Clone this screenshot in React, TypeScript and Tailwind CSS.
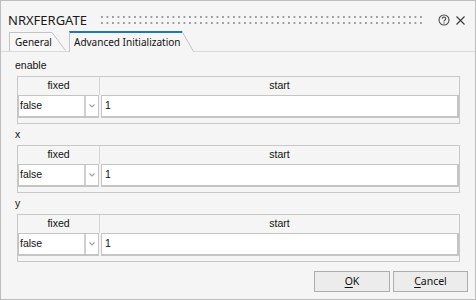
import React from "react";

const UI = "font-['Noto_Sans',sans-serif]";
const GRID = "font-['Liberation_Sans',Arial,sans-serif]";

const SECTIONS = [
  { label: "enable", fixed: "false", start: "1" },
  { label: "x",      fixed: "false", start: "1" },
  { label: "y",      fixed: "false", start: "1" },
];

function Grip() {
  return (
    <svg className="flex-1 h-[8px] mx-[14px]" shapeRendering="crispEdges">
      <defs>
        <pattern id="grip" width="5.5" height="6" patternUnits="userSpaceOnUse">
          <rect x="0" y="0" width="2" height="2" fill="#9c9c9c" />
        </pattern>
      </defs>
      <rect x="0" y="0" width="100%" height="8" fill="url(#grip)" />
    </svg>
  );
}

function HelpIcon() {
  return (
    <svg width="12" height="12" viewBox="0 0 12 12" className="shrink-0">
      <circle cx="6" cy="6" r="5" fill="none" stroke="#4a4a4a" strokeWidth="1.1" />
      <path d="M4.3 4.7a1.7 1.7 0 1 1 2.6 1.4c-.6.4-.9.7-.9 1.3" fill="none" stroke="#4a4a4a" strokeWidth="1.1" />
      <circle cx="6" cy="8.9" r="0.7" fill="#4a4a4a" />
    </svg>
  );
}

function CloseIcon() {
  return (
    <svg width="9" height="9" viewBox="0 0 9 9" className="shrink-0">
      <path d="M0.5 0.5L8.5 8.5M8.5 0.5L0.5 8.5" stroke="#3a3a3a" strokeWidth="1.1" />
    </svg>
  );
}

function Slant({ w, h, active }: { w: number; h: number; active?: boolean }) {
  return (
    <svg width={w} height={h} className="shrink-0 -ml-px">
      <polygon points={`0,0 0.5,0 ${w - 0.5},${h} 0,${h}`} fill={active ? "#f5f5f5" : "#f7f7f7"} />
      <line x1="0" y1="0.5" x2={w - 0.5} y2={h - 0.5} stroke="#c3c3c3" strokeWidth="1" />
    </svg>
  );
}

function ParamTable({ fixed, start }: { fixed: string; start: string }) {
  return (
    <div className={`ml-[16px] mr-[15px] h-[48px] border border-[#c8c8c8] flex flex-col ${GRID} text-[10.5px] text-[#111]`}>
      <div className="h-[18px] flex shrink-0">
        <div className="w-[82px] border-r border-[#d4d4d4] flex items-center justify-center">fixed</div>
        <div className="flex-1 flex items-center justify-center">start</div>
      </div>
      <div className="h-[23px] flex shrink-0">
        <div className="w-[81px] flex border-t border-b-2 border-l border-r border-[#c4c4c4] bg-white">
          <div className="flex-1 flex items-center pl-[1px]">{fixed}</div>
          <div className="w-[14px] border-l-2 border-[#cfcfcf] flex items-center justify-center">
            <svg width="6" height="4" viewBox="0 0 6 4">
              <path d="M0.5 0.5L3 3L5.5 0.5" fill="none" stroke="#a3a3a3" strokeWidth="1.2" />
            </svg>
          </div>
        </div>
        <div className="flex-1 ml-[2px] flex items-center pl-[3px] bg-white border-t border-l border-b-2 border-r-2 border-[#c4c4c4]">
          {start}
        </div>
      </div>
    </div>
  );
}

export default function App() {
  return (
    <div className="w-[476px] h-[300px] bg-[#f5f5f5] border border-[#bdbdbd] flex flex-col overflow-hidden">
      {/* Title bar */}
      <div className={`h-[30px] pt-[8px] pl-[7px] pr-[10px] flex items-center shrink-0 ${UI}`}>
        <span className="text-[13px] text-[#1a1a1a] leading-[18px]">NRXFERGATE</span>
        <Grip />
        <div className="flex items-center gap-[6px]">
          <HelpIcon />
          <CloseIcon />
        </div>
      </div>

      {/* Tabs */}
      <div className={`h-[21px] flex items-end border-b border-[#d9d9d9] pl-[8px] shrink-0 ${UI} text-[10px] text-[#111]`}>
        <div className="flex items-end">
          <div className="h-[19px] border-l border-t border-[#c3c3c3] bg-[#f7f7f7] pl-[5px] pr-[3px] flex items-center w-[44px]">
            General
          </div>
          <Slant w={14} h={19} />
        </div>
        <div className="flex items-end ml-[3px] -mb-px">
          <div className="h-[21px] border-l border-[#c3c3c3] border-t-2 border-t-[#1d78b5] bg-[#f5f5f5] pl-[4px] pb-[1px] flex items-center w-[114px]">
            Advanced Initialization
          </div>
          <Slant w={12} h={21} active />
        </div>
      </div>

      {/* Tab page */}
      <div className="flex-1 flex flex-col pt-[6px]">
        {SECTIONS.map((s, i) => (
          <div key={s.label} className={`flex flex-col ${i > 0 ? "mt-[3px]" : ""}`}>
            <div className={`h-[16px] pl-[14px] flex items-center ${GRID} text-[10.5px] text-[#111]`}>{s.label}</div>
            <div className="mt-[2px]">
              <ParamTable fixed={s.fixed} start={s.start} />
            </div>
          </div>
        ))}
      </div>

      {/* Buttons */}
      <div className={`flex justify-end gap-[3px] pr-[7px] pb-[7px] shrink-0 ${UI} text-[10.5px] text-[#111]`}>
        <button className="w-[76px] h-[21px] border border-[#adadad] bg-[#ececec] flex items-center justify-center">
          <span><span className="underline underline-offset-2">O</span>K</span>
        </button>
        <button className="w-[75px] h-[21px] border border-[#adadad] bg-[#ececec] flex items-center justify-center">
          <span><span className="underline underline-offset-2">C</span>ancel</span>
        </button>
      </div>
    </div>
  );
}
